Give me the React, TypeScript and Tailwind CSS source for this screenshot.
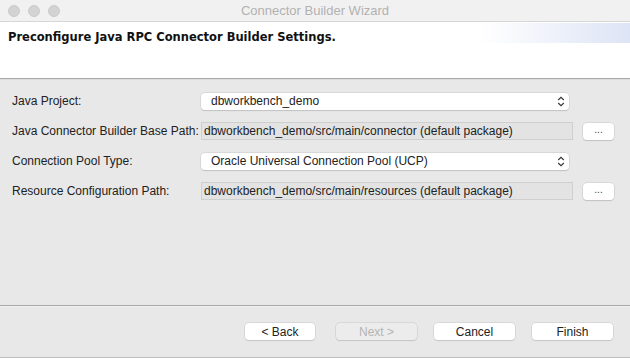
import React from 'react'

const font = { fontFamily: '"Liberation Sans", Arial, sans-serif' }

function Chevrons() {
  return (
    <svg width="8" height="11" viewBox="0 0 8 11" fill="none" stroke="#333" strokeWidth="1.1">
      <path d="M1.2 4 L4 1.3 L6.8 4" />
      <path d="M1.2 7 L4 9.7 L6.8 7" />
    </svg>
  )
}

function Select({ value }: { value: string }) {
  return (
    <div className="flex h-[17px] w-[368px] items-center justify-between rounded-[4px] bg-white pl-[10px] pr-[4px] text-[12px] text-[#222] shadow-[0_0_0_0.5px_#c8c8c8,0_1px_1px_rgba(0,0,0,0.18)]">
      <span>{value}</span>
      <Chevrons />
    </div>
  )
}

function ReadOnly({ value }: { value: string }) {
  return (
    <div className="flex h-[18px] w-[372px] items-center border border-[#cfcfcf] bg-[#e3e3e3] pl-[2px] text-[12px] text-[#222]">
      {value}
    </div>
  )
}

function Browse() {
  return (
    <div className="ml-[10px] flex h-[17px] w-[31px] items-center justify-center rounded-[4px] bg-white pb-[3px] text-[10px] text-[#444] shadow-[0_0_0_0.5px_#c8c8c8,0_1px_1px_rgba(0,0,0,0.18)]">
      ...
    </div>
  )
}

function Row({ label, children }: { label: string; children: React.ReactNode }) {
  return (
    <div className="flex h-[30px] items-center">
      <div className="w-[189px] text-[12px] text-[#222]">{label}</div>
      {children}
    </div>
  )
}

function Btn({ label, disabled }: { label: string; disabled?: boolean }) {
  return (
    <div
      className={`flex h-[17px] items-center justify-center rounded-[4px] text-[12px] shadow-[0_0_0_0.5px_#c8c8c8,0_1px_1px_rgba(0,0,0,0.15)] ${
        disabled ? 'bg-[#ececec] text-[#b4b4b4]' : 'bg-white text-[#222]'
      }`}
      style={{ width: label === '< Back' ? 70 : 81 }}
    >
      {label}
    </div>
  )
}

export default function App() {
  return (
    <div className="flex h-[358px] w-[630px] flex-col overflow-hidden bg-[#e8e8e8]" style={font}>
      {/* title bar */}
      <div className="relative flex h-[22px] items-center justify-center border-b border-[#d6d6d6] bg-[#f1f1f1]">
        <div className="absolute left-[8px] top-[5px] flex gap-[8px]">
          <span className="h-[12px] w-[12px] rounded-full border border-[#cbcbcb] bg-[#d3d3d3]" />
          <span className="h-[12px] w-[12px] rounded-full border border-[#cbcbcb] bg-[#d3d3d3]" />
          <span className="h-[12px] w-[12px] rounded-full border border-[#cbcbcb] bg-[#d3d3d3]" />
        </div>
        <span className="text-[13px] text-[#b2b2b2]">Connector Builder Wizard</span>
      </div>

      {/* header */}
      <div className="relative h-[56px] bg-white">
        <div className="absolute right-0 top-[1px] h-[20px] w-[150px] bg-gradient-to-r from-white to-[#dde4f5]" />
        <div className="relative pl-[8px] pt-[7px] text-[11.5px] font-bold text-[#111]" style={{ fontFamily: '"DejaVu Sans", Verdana, sans-serif' }}>
          Preconfigure Java RPC Connector Builder Settings.
        </div>
      </div>
      <div className="h-[1px] bg-[#a9a9a9]" />
      <div className="h-[1px] bg-[#dcdcdc]" />

      {/* body */}
      <div className="flex h-[225px] flex-col pl-[12px] pt-[6px]">
        <Row label="Java Project:">
          <Select value="dbworkbench_demo" />
        </Row>
        <Row label="Java Connector Builder Base Path:">
          <ReadOnly value="dbworkbench_demo/src/main/connector (default package)" />
          <Browse />
        </Row>
        <Row label="Connection Pool Type:">
          <Select value="Oracle Universal Connection Pool (UCP)" />
        </Row>
        <Row label="Resource Configuration Path:">
          <ReadOnly value="dbworkbench_demo/src/main/resources (default package)" />
          <Browse />
        </Row>
      </div>
      <div className="h-[1px] bg-[#a9a9a9]" />
      <div className="h-[1px] bg-[#f2f2f2]" />

      {/* buttons */}
      <div className="flex flex-1 items-start border-b border-[#bdbdbd] pl-[245px] pt-[16px]">
        <Btn label="< Back" />
        <div className="ml-[21px]">
          <Btn label="Next >" disabled />
        </div>
        <div className="ml-[17px]">
          <Btn label="Cancel" />
        </div>
        <div className="ml-[17px]">
          <Btn label="Finish" />
        </div>
      </div>
    </div>
  )
}
